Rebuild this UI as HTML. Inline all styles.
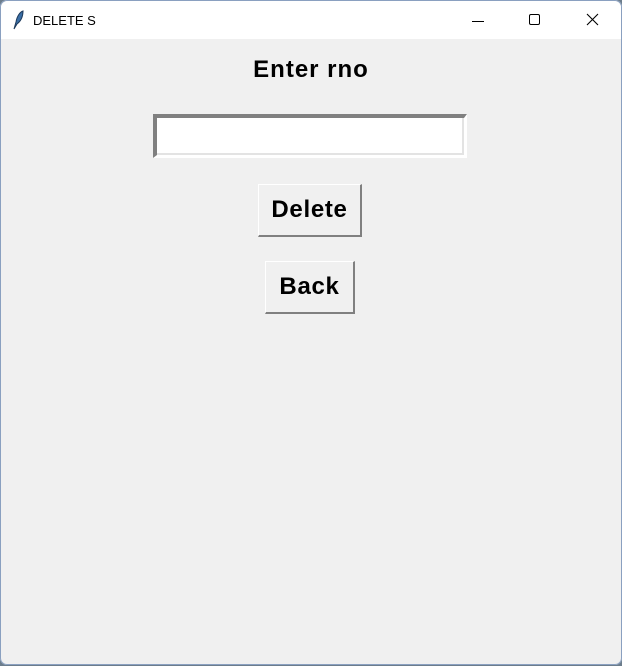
<!DOCTYPE html>
<html><head><style>
html,body{margin:0;padding:0;width:622px;height:666px;overflow:hidden;background:#6c7d8c;}
.win{position:absolute;left:0;top:0;width:622px;height:665px;background:#f0f0f0;border-radius:7px;overflow:hidden;box-shadow:inset 0 0 0 1px #8aa0c0;}
.title{position:absolute;left:1px;top:1px;width:620px;height:38px;background:#fff;border-radius:7px 7px 0 0;font-family:"Liberation Sans",sans-serif;font-size:13px;}
.title .t{position:absolute;left:32px;top:12px;color:#000;}
.lbl{position:absolute;left:0;width:622px;top:56px;text-align:center;font:bold 24px "Liberation Sans",sans-serif;color:#000;letter-spacing:1px;}
.entry{position:absolute;left:153px;top:114px;width:314px;height:44px;box-sizing:border-box;background:#fff;border-style:solid;border-width:4px 3px 3px 4px;border-color:#808080 #fff #fff #808080;}
.entry::after{content:"";position:absolute;left:0;top:0;right:0;bottom:0;border-style:solid;border-width:0 2px 2px 0;border-color:#e3e3e3;}
.btn{position:absolute;box-sizing:border-box;background:#f0f0f0;border-style:solid;border-width:1px 2px 2px 1px;border-color:#fff #808080 #808080 #fff;font:bold 24px "Liberation Sans",sans-serif;color:#000;text-align:center;letter-spacing:0.7px;}
</style></head><body>
<div class="win">
<div class="title">
<svg style="position:absolute;left:10px;top:9px" width="14" height="20" viewBox="0 0 14 20"><path d="M3 19 L5 12 C6 6 9 2 12 1 C12 6 10 11 6 14 Z" fill="#3a6ea5" stroke="#1d3a5c" stroke-width="1"/></svg>
<span class="t">DELETE S</span>
<svg style="position:absolute;left:470px;top:13px" width="14" height="14"><path d="M1 7.5H13" stroke="#000" stroke-width="1"/></svg>
<svg style="position:absolute;left:527px;top:12px" width="14" height="14"><rect x="1.5" y="1.5" width="10" height="10" rx="1.5" fill="none" stroke="#000" stroke-width="1"/></svg>
<svg style="position:absolute;left:585px;top:12px" width="14" height="14"><path d="M1 1L12 12M12 1L1 12" stroke="#000" stroke-width="1.1"/></svg>
</div>
<div class="lbl">Enter rno</div>
<div class="entry"></div>
<div class="btn" style="left:258px;top:184px;width:104px;height:53px;line-height:50px;">Delete</div>
<div class="btn" style="left:265px;top:261px;width:90px;height:53px;line-height:50px;">Back</div>
</div>
</body></html>
